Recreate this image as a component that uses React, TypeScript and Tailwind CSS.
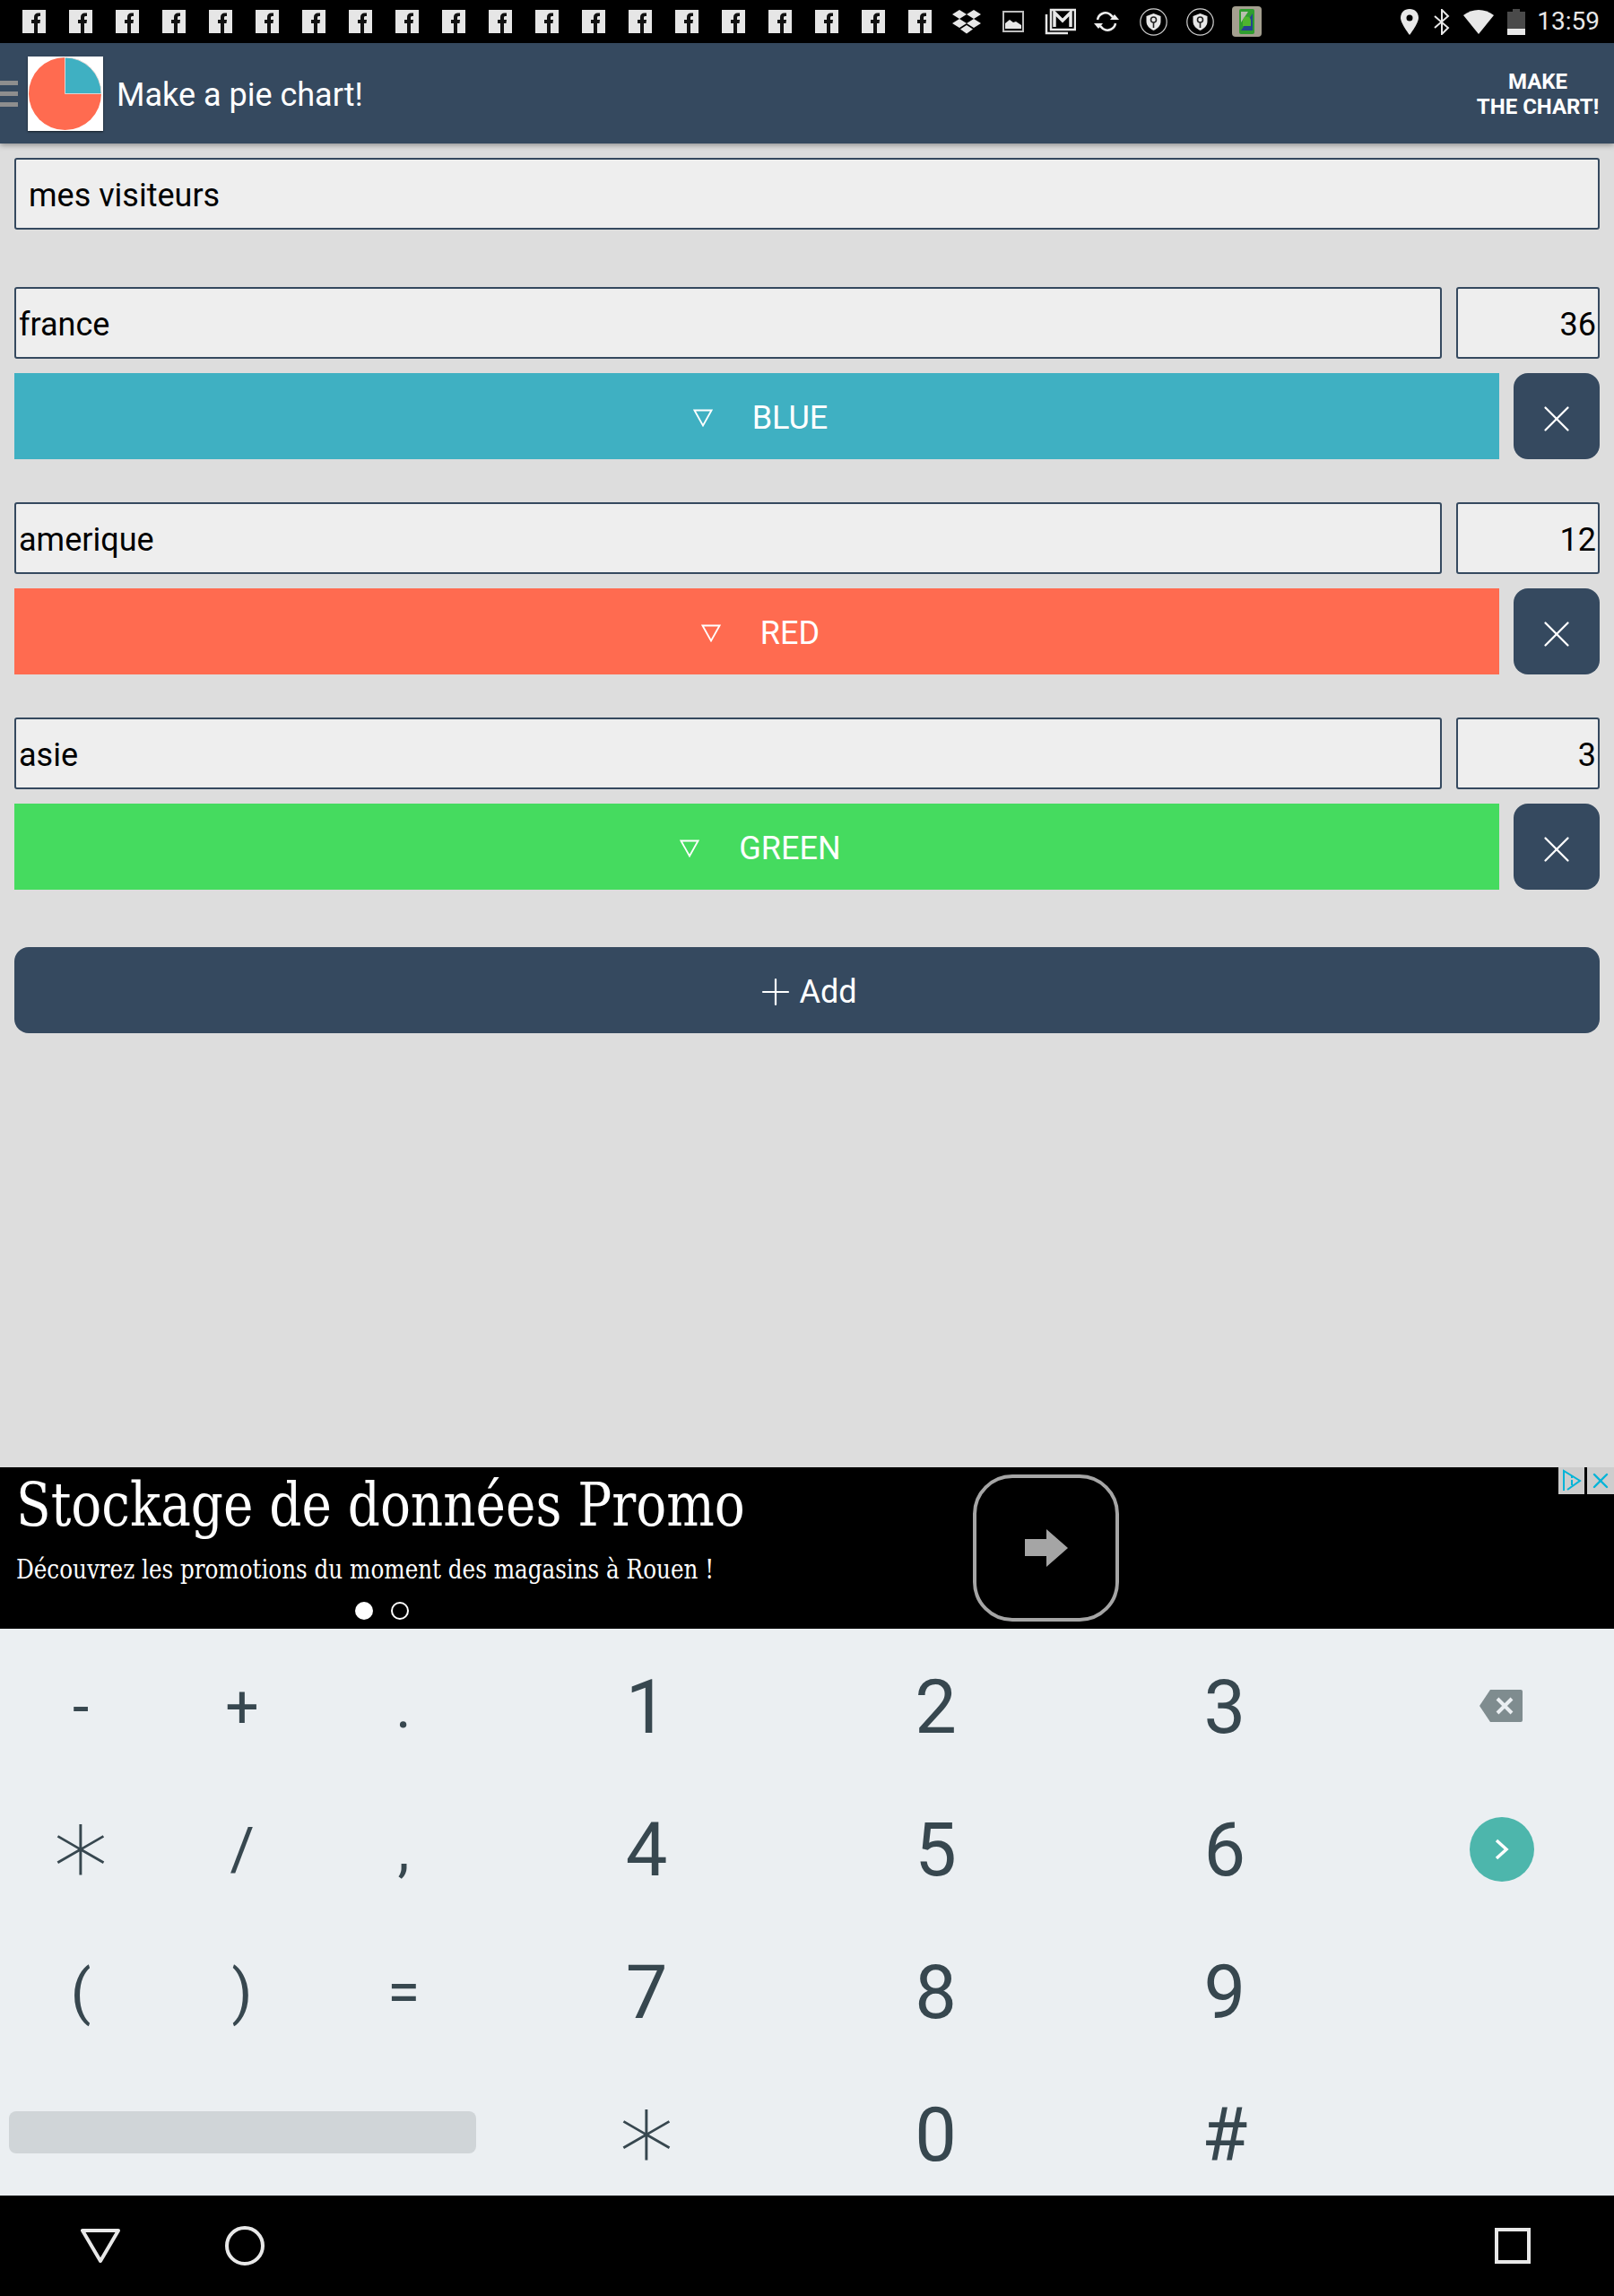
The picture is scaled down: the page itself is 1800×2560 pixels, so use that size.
import { Plus, X } from 'lucide-react';

const NAVY = 'bg-[#35495f]';

function FbIcon() {
  return (
    <svg width="26" height="26" viewBox="0 0 26 26" className="shrink-0">
      <rect width="26" height="26" fill="#e6e6e6" />
      <path d="M13 26V15h-3v-4h3V8c0-3 2-4.500 4.500-4.500H20V7h-1.500C17 7 17 8 17 9v2h3l-.5 4H17v11z" fill="#111" />
    </svg>
  );
}

function StatusBar() {
  return (
    <div className="flex h-[48px] shrink-0 items-center bg-black pl-[25px] pr-[16px]">
      <div className="flex gap-[26px]">
        {Array.from({ length: 20 }).map((_, i) => (
          <FbIcon key={i} />
        ))}
      </div>
      {/* dropbox */}
      <svg width="32" height="28" viewBox="0 0 32 28" className="ml-[23px]" fill="#e8e8e8">
        <path d="M8 1l8 5-8 5-8-5zM24 1l8 5-8 5-8-5zM8 11l8 5-8 5-8-5zM24 11l8 5-8 5-8-5zM16 18l7 4.500-7 5-7-5z" />
      </svg>
      {/* picture */}
      <svg width="24" height="24" viewBox="0 0 24 24" className="ml-[24px]">
        <rect x="1" y="1" width="22" height="22" fill="none" stroke="#bdbdbd" strokeWidth="2" />
        <path d="M3 20v-6l5-4 4 3 3-1 6 4v4z" fill="#e8e8e8" />
      </svg>
      {/* gmail stack */}
      <svg width="35" height="30" viewBox="0 0 35 30" className="ml-[23px]" fill="none" stroke="#e8e8e8" strokeWidth="2.500">
        <path d="M2 7v21h24" />
        <path d="M7 2h27v22H7z" />
        <path d="M11 21V5l9 9 9-9v16" strokeWidth="3.500" />
      </svg>
      {/* sync */}
      <svg width="30" height="28" viewBox="0 0 30 28" className="ml-[19px]" fill="none" stroke="#eee" strokeWidth="2.500">
        <path d="M5 12c1-6 8-10 14-6l3 3" />
        <path d="M25 16c-1 6-8 10-14 6l-3-3" />
        <path d="M19 12h10l-5-6z" fill="#eee" stroke="none" />
        <path d="M1 16h10l-5 6z" fill="#eee" stroke="none" />
      </svg>
      {[0, 1].map((i) => (
        <svg key={i} width="31" height="31" viewBox="0 0 31 31" className={i === 0 ? 'ml-[22px]' : 'ml-[21px]'}>
          <circle cx="15.500" cy="15.500" r="14.700" fill="none" stroke="#cfcfcf" strokeWidth="1.200" />
          <path d="M15.500 6l8 3v6c0 5-4 8-8 10-4-2-8-5-8-10V9z" fill="#e8e8e8" />
          <circle cx="15.500" cy="13" r="3" fill="none" stroke="#222" strokeWidth="1.600" />
          <path d="M15.500 16v6" stroke="#222" strokeWidth="1.600" />
        </svg>
      ))}
      <svg width="33" height="34" viewBox="0 0 33 34" className="ml-[20px]">
        <rect width="33" height="34" rx="4" fill="#a49f8f" />
        <rect x="8" y="3" width="17" height="28" rx="2" fill="#2f9e2f" />
        <path d="M10 27L23 8v19z" fill="#25438f" />
        <path d="M10 6h8L10 18z" fill="#b8bfae" />
        <path d="M12 16a4.500 4.500 0 0 1 9 0v6h-9z" fill="#4fb52e" />
      </svg>
      <div className="ml-auto flex items-center">
        <svg width="20" height="29" viewBox="0 0 20 29">
          <path d="M10 0C4 0 0 4 0 10c0 6 10 19 10 19s10-13 10-19C20 4 16 0 10 0z" fill="#e8e8e8" />
          <circle cx="10" cy="10" r="3.500" fill="#000" />
        </svg>
        <svg width="18" height="29" viewBox="0 0 18 29" className="ml-[17px]" fill="none" stroke="#e8e8e8" strokeWidth="2">
          <path d="M1 8l15 13-7 7V1l7 7L1 21" />
        </svg>
        <svg width="34" height="27" viewBox="0 0 34 27" className="ml-[15px]">
          <path d="M0 6C10-2 24-2 34 6L17 27z" fill="#e8e8e8" />
        </svg>
        <div className="ml-[15px] flex h-[29px] w-[20px] flex-col">
          <div className="mx-auto h-[3px] w-[8px] bg-[#4a4a4a]" />
          <div className="h-[19px] bg-[#4a4a4a]" />
          <div className="h-[7px] bg-[#e8e8e8]" />
        </div>
        <span className="ml-[13px] font-['Roboto',sans-serif] text-[28px] leading-none text-[#e8e8e8]">13:59</span>
      </div>
    </div>
  );
}

function AppBar() {
  return (
    <div className={`relative z-10 flex h-[112px] shrink-0 items-center ${NAVY} shadow-[0_2px_6px_rgba(0,0,0,0.35)]`}>
      <div className="flex w-[20px] flex-col gap-[7px]">
        <div className="h-[5px] bg-[#8e8e8e]" />
        <div className="h-[5px] bg-[#8e8e8e]" />
        <div className="h-[5px] bg-[#8e8e8e]" />
      </div>
      <svg width="84" height="83" viewBox="0 0 84 83" className="ml-[11px] shadow-[0_1px_2px_rgba(0,0,0,0.6)]">
        <rect width="84" height="83" fill="#fff" />
        <circle cx="41.500" cy="41.500" r="40.500" fill="#ff6b50" />
        <path d="M41.500 41.500V1a40.500 40.500 0 0 1 40.500 40.500z" fill="#3fb0c2" stroke="#f3e9e4" strokeWidth="0.800" />
      </svg>
      <span className="ml-[15px] pt-[4px] text-[36px] leading-none text-white">Make a pie chart!</span>
      <div className="ml-auto mr-[15px] w-[140px] pt-[2px] text-center text-[24px] font-bold leading-[28px] text-white">
        <div>MAKE</div>
        <div>THE CHART!</div>
      </div>
    </div>
  );
}

function Field({ children, className }: { children: string; className: string }) {
  return (
    <div className={`flex h-[80px] items-center rounded-[3px] border-2 border-[#35495f] bg-[#eeeeee] pt-[4px] text-[36px] leading-none text-black ${className}`}>
      {children}
    </div>
  );
}

function SliceRow({ label, value, name, color }: { label: string; value: string; name: string; color: string }) {
  return (
    <div className="flex flex-col gap-[16px]">
      <div className="flex gap-[16px]">
        <Field className="flex-1 pl-[3px]">{label}</Field>
        <Field className="w-[160px] justify-end pr-[2px]">{value}</Field>
      </div>
      <div className="flex gap-[16px]">
        <div className={`flex h-[96px] flex-1 items-center justify-center gap-[44px] pl-[8px] pt-[3px] text-[36px] leading-none text-white ${color}`}>
          <svg width="22" height="20" viewBox="0 0 22 20" fill="none" stroke="#fff" strokeWidth="1.800">
            <path d="M1.500 1.500h19L11 18.500z" />
          </svg>
          <span>{name}</span>
        </div>
        <div className={`flex h-[96px] w-[96px] items-center justify-center rounded-[16px] pt-[5px] ${NAVY}`}>
          <X size={50} strokeWidth={1.100} className="text-white" />
        </div>
      </div>
    </div>
  );
}

function AdBanner() {
  return (
    <div className="relative flex h-[180px] shrink-0 bg-black text-white">
      <div className="w-[1085px] pl-[18px] font-['DejaVu_Serif_Condensed','Liberation_Serif',serif]">
        <div className="mt-[5px] origin-left scale-x-[0.923] whitespace-nowrap text-[68px] leading-[74px]">Stockage de données Promo</div>
        <div className="mt-[17px] origin-left scale-x-[0.945] whitespace-nowrap text-[29px] leading-[36px]">Découvrez les promotions du moment des magasins à Rouen !</div>
        <div className="mt-[18px] flex gap-[20px] pl-[378px]">
          <div className="h-[20px] w-[20px] rounded-full bg-white" />
          <div className="h-[20px] w-[20px] rounded-full border-2 border-white" />
        </div>
      </div>
      <div className="mt-[8px] flex h-[164px] w-[163px] items-center justify-center rounded-[44px] border-[4px] border-[#a5a5a5]">
        <svg width="48" height="42" viewBox="0 0 48 42">
          <path d="M0 11h24V0l24 21-24 21V30H0z" fill="#a5a5a5" />
        </svg>
      </div>
      <div className="absolute right-0 top-0 flex gap-[3px]">
        <div className="flex h-[30px] w-[29px] items-center justify-center bg-[#cdcdcd]">
          <svg width="24" height="26" viewBox="0 0 24 26" fill="none" stroke="#00b4d8" strokeWidth="2">
            <path d="M3 24V2l18 11-14 10" />
            <path d="M12 12v6M12 8v2" />
          </svg>
        </div>
        <div className="flex h-[30px] w-[30px] items-center justify-center bg-[#cdcdcd]">
          <X size={28} strokeWidth={2} className="text-[#00b4d8]" />
        </div>
      </div>
    </div>
  );
}

const SYMBOL_ROWS = [
  ['-', '+', '.'],
  ['∗', '/', ','],
  ['(', ')', '='],
];
const DIGIT_ROWS = [
  ['1', '2', '3'],
  ['4', '5', '6'],
  ['7', '8', '9'],
  ['∗', '0', '#'],
];

function SymbolKey({ k }: { k: string }) {
  if (k === '∗') {
    return <span className="-translate-y-[5px] font-['DejaVu_Sans',sans-serif] text-[124px] font-light leading-none">∗</span>;
  }
  return <span className="text-[66px] leading-none">{k}</span>;
}

function Keyboard() {
  return (
    <div className="flex h-[632px] shrink-0 overflow-hidden bg-[#ebeff2] pt-[8px] text-[#37474f]">
      <div className="w-[558px]">
        {SYMBOL_ROWS.map((row, i) => (
          <div key={i} className="grid h-[159px] grid-cols-[180px_180px_180px] items-center justify-items-center">
            {row.map((k) => (
              <SymbolKey key={k} k={k} />
            ))}
          </div>
        ))}
        <div className="flex h-[159px] items-center pb-[6px] pl-[10px]">
          <div className="h-[47px] w-[521px] rounded-[8px] bg-[#d0d5d8]" />
        </div>
      </div>
      <div className="w-[969px] pl-[2px]">
        {DIGIT_ROWS.map((row, i) => (
          <div key={i} className="grid h-[159px] grid-cols-3 items-center justify-items-center">
            {row.map((k) =>
              k === '∗' ? (
                <SymbolKey key={k} k={k} />
              ) : (
                <span key={k} className="text-[83px] leading-none">
                  {k}
                </span>
              )
            )}
          </div>
        ))}
      </div>
      <div className="flex w-[273px] flex-col pl-[112px]">
        <div className="flex h-[159px] items-center pb-[4px] pl-[11px]">
          <svg width="48" height="36" viewBox="0 0 48 36">
            <path d="M12 0h34a2 2 0 0 1 2 2v32a2 2 0 0 1-2 2H12L0 18z" fill="#7f8c8f" />
            <path d="M20 10l16 16M36 10L20 26" stroke="#ebeff2" strokeWidth="4" />
          </svg>
        </div>
        <div className="flex h-[159px] items-center pb-[2px]">
          <div className="flex h-[72px] w-[72px] items-center justify-center rounded-full bg-[#4db6ac]">
            <svg width="16" height="24" viewBox="0 0 16 24" fill="none" stroke="#fff" strokeWidth="3.500">
              <path d="M2 2l11 10L2 22" />
            </svg>
          </div>
        </div>
      </div>
    </div>
  );
}

function NavBar() {
  return (
    <div className="flex h-[112px] shrink-0 items-center bg-black pl-[90px] pr-[93px]">
      <svg width="44" height="39" viewBox="0 0 44 39" fill="none" stroke="#e8e8e8" strokeWidth="4" strokeLinejoin="round">
        <path d="M2 2h40L22 36z" />
      </svg>
      <svg width="44" height="44" viewBox="0 0 44 44" className="ml-[117px]" fill="none" stroke="#e8e8e8" strokeWidth="4">
        <circle cx="22" cy="22" r="20" />
      </svg>
      <div className="ml-auto h-[40px] w-[40px] border-4 border-[#e8e8e8]" />
    </div>
  );
}

export default function App() {
  return (
    <div className="flex h-[2560px] w-[1800px] flex-col overflow-hidden bg-[#dddddd] font-['Roboto',sans-serif]">
      <StatusBar />
      <AppBar />
      <div className="flex flex-1 flex-col px-[16px] pt-[16px]">
        <Field className="pl-[14px]">mes visiteurs</Field>
        <div className="mt-[64px] flex flex-col gap-[48px]">
          <SliceRow label="france" value="36" name="BLUE" color="bg-[#3fb0c2]" />
          <SliceRow label="amerique" value="12" name="RED" color="bg-[#ff6b50]" />
          <SliceRow label="asie" value="3" name="GREEN" color="bg-[#45db5f]" />
        </div>
        <div className={`mt-[64px] flex h-[96px] items-center justify-center gap-[2px] rounded-[16px] pr-[3px] pt-[4px] text-[36px] leading-none text-white ${NAVY}`}>
          <Plus size={48} strokeWidth={1.100} />
          <span>Add</span>
        </div>
      </div>
      <AdBanner />
      <Keyboard />
      <NavBar />
    </div>
  );
}
